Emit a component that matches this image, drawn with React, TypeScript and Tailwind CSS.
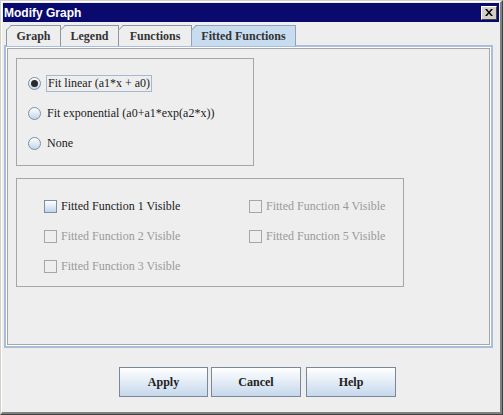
import React from 'react'

const serif = { fontFamily: '"Liberation Serif", "Times New Roman", serif' }

const TABS = [
  { label: 'Graph', w: 'w-[55px]' },
  { label: 'Legend', w: 'w-[59px]' },
  { label: 'Functions', w: 'w-[74px]' },
  { label: 'Fitted Functions', w: 'w-[105px]' },
]

function Radio({ checked }: { checked?: boolean }) {
  return (
    <span className="flex h-[13px] w-[13px] items-center justify-center rounded-full border border-[#7b8ea6] bg-gradient-to-b from-white to-[#c3d4ea]">
      {checked && <span className="h-[7px] w-[7px] rounded-full bg-[#2a2a2a]" />}
    </span>
  )
}

function Check({ enabled }: { enabled?: boolean }) {
  return enabled ? (
    <span className="h-[13px] w-[13px] border border-[#7b8ea6] bg-gradient-to-b from-white to-[#c3d4ea]" />
  ) : (
    <span className="h-[13px] w-[13px] border border-[#a6a6a6] bg-[#eeeeee]" />
  )
}

function CheckRow({ label, enabled }: { label: string; enabled?: boolean }) {
  return (
    <div className="flex h-[30px] items-center gap-[4px]">
      <Check enabled={enabled} />
      <span className={enabled ? 'text-[#1a1a1a]' : 'text-[#9a9a9a]'}>{label}</span>
    </div>
  )
}

function Button({ label, className }: { label: string; className: string }) {
  return (
    <button
      className={
        'flex h-[30px] items-center justify-center border border-[#7a8796] bg-gradient-to-b from-white to-[#c6d8ec] text-[12px] font-bold text-[#222] ' +
        className
      }
    >
      {label}
    </button>
  )
}

export default function App() {
  return (
    <div
      className="h-[415px] w-[503px] overflow-hidden border border-t-[#d4d0c8] border-l-[#d4d0c8] border-r-[#404040] border-b-[#404040] bg-[#d4d0c8]"
      style={serif}
    >
      <div className="flex h-full flex-col border-t border-l border-r-2 border-b-2 border-t-white border-l-white border-r-[#808080] border-b-[#808080] bg-[#eeeeee] p-px">
        {/* title bar */}
        <div className="flex h-[19px] shrink-0 items-center justify-between bg-[#0a0a6e] pl-px pr-[2px]">
          <span
            className="font-bold text-white"
            style={{ fontFamily: '"Liberation Sans", Arial, sans-serif', fontSize: 12 }}
          >
            Modify Graph
          </span>
          <span className="flex h-[14px] w-[16px] items-center justify-center border border-t-white border-l-white border-r-[#404040] border-b-[#404040] bg-[#d4d0c8]">
            <svg width="8" height="7" viewBox="0 0 8 7">
              <path d="M0 0h2l2 2.5L6 0h2L5 3.5 8 7H6L4 4.5 2 7H0l3-3.5z" fill="#000" />
            </svg>
          </span>
        </div>

        {/* tabs */}
        <div className="flex h-[23px] shrink-0 items-end pl-[3px] pt-[2px]">
          {TABS.map((t) => {
            const active = t.label === 'Fitted Functions'
            return (
              <div
                key={t.label}
                className={
                  'relative -mb-px -mr-px flex h-[21px] items-center justify-center border border-b-0 pb-px text-[12px] font-bold text-[#333] ' +
                  t.w +
                  (active
                    ? ' z-10 border-[#8ea3bd] bg-[#c8dcf0]'
                    : ' border-[#8a96a4] bg-[#eeeeee]')
                }
                style={{ clipPath: 'polygon(5px 0, 100% 0, 100% 100%, 0 100%, 0 5px)' }}
              >
                {t.label}
                <span className="absolute left-[-1px] top-[4px] h-px w-[8px] origin-left -rotate-45 bg-[#8a96a4]" />
              </div>
            )
          })}
        </div>

        {/* panel */}
        <div className="ml-px mr-[6px] h-[303px] shrink-0 border-2 border-[#a9bedb] bg-white p-px">
          <div className="flex h-full flex-col gap-[12px] border border-[#a6a6a6] bg-[#eeeeee] pl-[8px] pt-[9px] text-[12px]">
            <div className="flex h-[108px] w-[238px] flex-col border border-[#a6a6a6] pl-[11px] pt-[9px]">
              <div className="flex h-[30px] items-center gap-[5px]">
                <Radio checked />
                <span className="border border-[#a8b8cc] px-px leading-[15px] text-[#1a1a1a]">Fit linear (a1*x + a0)</span>
              </div>
              <div className="flex h-[30px] items-center gap-[6px] text-[#1a1a1a]">
                <Radio />
                <span>Fit exponential (a0+a1*exp(a2*x))</span>
              </div>
              <div className="flex h-[30px] items-center gap-[6px] text-[#1a1a1a]">
                <Radio />
                <span>None</span>
              </div>
            </div>

            <div className="flex h-[109px] w-[388px] border border-[#a6a6a6] pl-[27px] pt-[12px]">
              <div className="flex w-[205px] flex-col">
                <CheckRow label="Fitted Function 1 Visible" enabled />
                <CheckRow label="Fitted Function 2 Visible" />
                <CheckRow label="Fitted Function 3 Visible" />
              </div>
              <div className="flex flex-col">
                <CheckRow label="Fitted Function 4 Visible" />
                <CheckRow label="Fitted Function 5 Visible" />
              </div>
            </div>
          </div>
        </div>

        {/* buttons */}
        <div className="flex pl-[116px] pt-[19px]">
          <Button label="Apply" className="w-[89px]" />
          <Button label="Cancel" className="ml-[3px] w-[90px]" />
          <Button label="Help" className="ml-[5px] w-[90px]" />
        </div>
      </div>
    </div>
  )
}
